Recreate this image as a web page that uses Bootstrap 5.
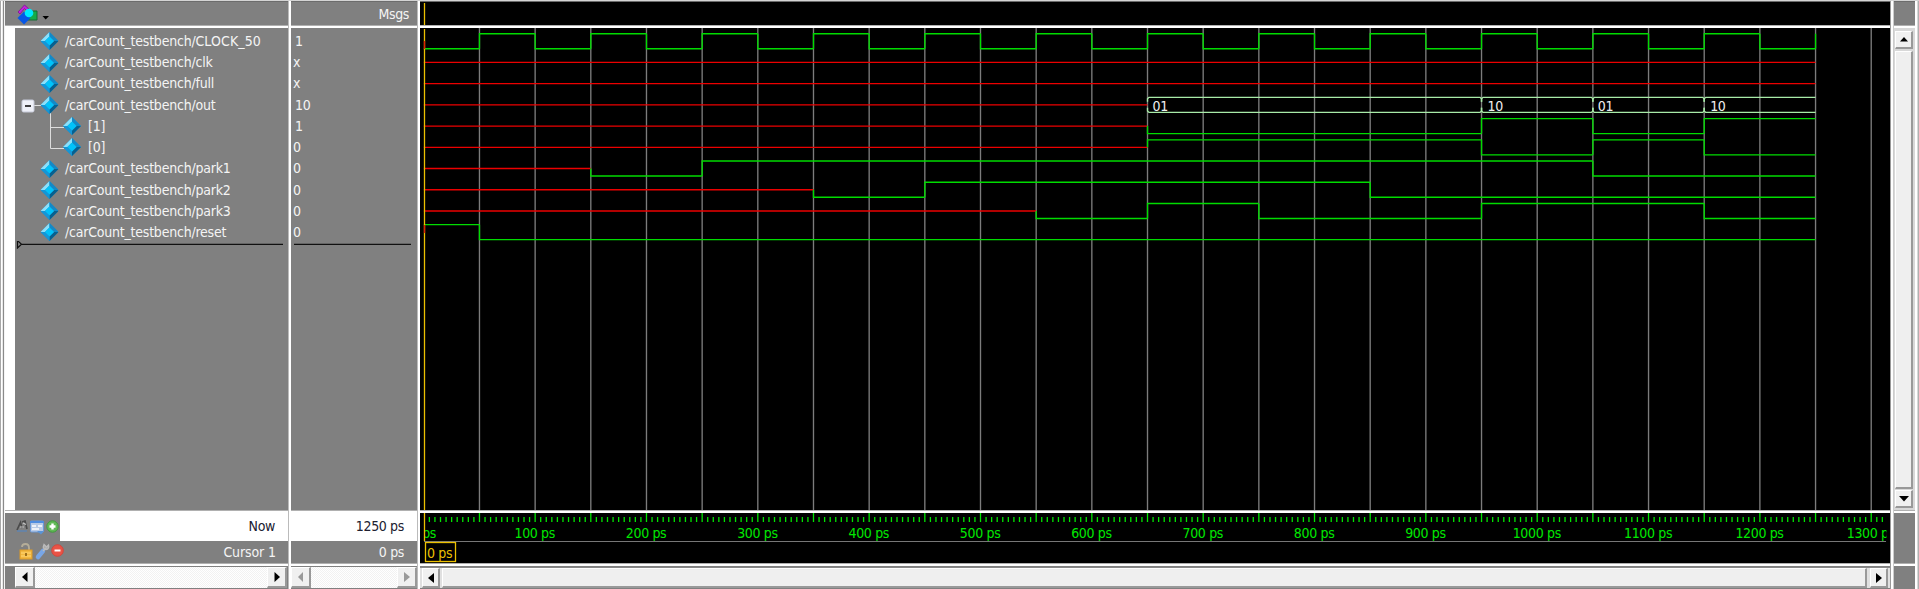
<!DOCTYPE html>
<html lang="en">
<head>
<meta charset="utf-8">
<title>Wave</title>
<link rel="stylesheet" href="https://cdn.jsdelivr.net/npm/bootstrap@5.3.0/dist/css/bootstrap.min.css">
<style>
:root{--pane:#808080}
body{font-family:"DejaVu Sans Condensed","DejaVu Sans",sans-serif;font-stretch:condensed;font-size:14px;line-height:21.22px;letter-spacing:-.35px;background:#808080;color:#f4f4f4;height:589px;overflow:hidden}
.win{height:589px;border-top:1px solid #d4d4d4}
.edge-l{width:5px;background:linear-gradient(90deg,#a8a8a8 0 1px,#fff 1px 2px,#e8e8e8 2px 3px,#8a8a8a 3px 4px,#f4f4f4 4px 5px)}
.edge-r{width:4px;background:linear-gradient(90deg,#fff 0 2px,#d8d8d8 2px 3px,#b0b0b0 3px 4px)}
.splitv{width:3px;background:linear-gradient(90deg,#bbb 0 1px,#fff 1px 3px)}
.splitv-r{width:4px;background:linear-gradient(90deg,#999 0 1px,#fff 1px 3px,#ccc 3px 4px)}
.splith{height:3px;background:linear-gradient(#b0b0b0 0 1px,#fff 1px 3px)}
.colm>*{flex:none}
.c-names{width:283px}.c-vals{width:126px}.c-wave{width:1470px}.c-right{width:21px}
.r-head{height:24px;border-top:1px solid #6c6c6c}
.r-main{height:482px}
.r-now{height:28px}.r-cur{height:22px}
.r-scroll{height:23px;padding-top:1px}
.r-main,.r-head,.r-cur,.r-scroll{background:var(--pane)}
.gut{width:10px;background:#fff}
.names-in{padding-top:2.4px}
.sig{height:21.22px;white-space:pre}
.sig svg{flex:none}
.sig>span{letter-spacing:-.22px;padding-top:.6px}
.caps{letter-spacing:.1px}
.vals-in .sig{padding-top:.6px}
.endmark{margin-top:-2px}
.vals-in{padding:2.4px 5px 0 2px}
.v1{padding-left:2px}
.nowbar{background:#fff;color:#202030}
.sb{height:21px}
.sbtn{width:20px;background:#f0f0f0;border:1px solid #fff;border-right:2px solid #999;border-bottom:2px solid #999;display:flex;align-items:center;justify-content:center;flex:none}
.trough{background:repeating-conic-gradient(#fff 0 25%,#f2f2f2 0 50%) 0 0/2px 2px}
.thumb{background:#efefef;border:1px solid #fff;border-right:2px solid #999;border-bottom:2px solid #999}
.vbar{background:#d8d8d8;padding:3px 2px 0 1px}
.vbar .sbtn{width:18px;height:18px}
.wbar{background:#e0e0e0;padding:0 2px 0 2px;height:21px;border-top:1px solid #888}
svg text{font-family:"DejaVu Sans Condensed","DejaVu Sans",sans-serif;font-stretch:condensed;font-size:14px;letter-spacing:-.35px}
svg{display:block}
</style>
</head>
<body>
<svg width="0" height="0" class="position-absolute"><defs>
<symbol id="gem" viewBox="0 0 18 18"><path d="M9 0L18 9L9 18L0 9Z" fill="#158fcb"/><path d="M9 0L0 9H4.5L9 4.5Z" fill="#8ce0fa"/><path d="M9 0L18 9H13.5L9 4.5Z" fill="#1489c6"/><path d="M18 9L9 18V13.5L13.5 9Z" fill="#07608f"/><path d="M0 9L9 18V13.5L4.5 9Z" fill="#1596d6"/><path d="M9 4.4L13.6 9L9 13.6L4.4 9Z" fill="#00c3fa"/></symbol>
</defs></svg>
<div class="win d-flex">
  <div class="edge-l"></div>
  <div class="colm c-names d-flex flex-column">
    <div class="r-head"><svg width="60" height="23"><path d="M13 10L19.500 3L25 8L23 10L19.500 6.500L15 12Z" fill="#c61fe0" stroke="#842094"/><path d="M25 9H32V18H21Z" fill="#14ad49" stroke="#176d35"/><path d="M19 9.500L25.500 16L19 22.500L12.500 16Z" fill="#0757e6"/><circle cx="24" cy="11" r="4.300" fill="#00eaff"/><path d="M37.500 14H44L40.700 17.500Z" fill="#000"/></svg></div>
    <div class="splith"></div>
    <div class="r-main d-flex">
      <div class="gut"></div>
      <div class="names-in flex-grow-1" id="names"></div>
    </div>
    <div class="splith"></div>
    <div class="r-now d-flex">
      <svg width="55" height="28"><path d="M12 17L15.500 9.500L17 15M17 9L20 8L22 16" fill="none" stroke="#4a4a4a" stroke-width="1.700"/><path d="M15 14H19M18 10L21 11.500" stroke="#c4c4c4" stroke-width="1.200"/><path d="M12 18H22" stroke="#4f86c9" fill="none"/><rect x="25.500" y="8" width="13" height="11" rx="1" fill="#b9cbe6" stroke="#6b98d6"/><path d="M25 9H39" stroke="#4f8de0" stroke-width="2"/><path d="M27 13H31M33 13H37M27 16H34" stroke="#fff" stroke-width="1.500"/><path d="M32 18H39L36 21.500Z" fill="#5a94d7"/><circle cx="47.500" cy="13.500" r="5.700" fill="#62b957" stroke="#3f9b3c"/><path d="M47.500 10.500V16.500M44.500 13.500H50.500" stroke="#fff" stroke-width="2.400"/></svg>
      <div class="nowbar flex-grow-1 d-flex align-items-center justify-content-end" style="padding-right:13px">Now</div>
    </div>
    <div class="r-cur d-flex align-items-center justify-content-between" style="padding-right:12px">
      <svg width="62" height="22"><path d="M17 6Q17 3 20.500 3Q24 3 24 7V10" fill="none" stroke="#b5ad98" stroke-width="1.800"/><rect x="15" y="9" width="12" height="9" fill="#f2b840" stroke="#dc9a26"/><path d="M16 12H26M16 15H26" stroke="#ffd878"/><path d="M21 12V15" stroke="#80540a" stroke-width="1.500"/><path d="M33 16L38 10" stroke="#78a6e6" stroke-width="4.500" stroke-linecap="round"/><path d="M38 10L41 7M39 3.500Q37 8 41 8.500Q44.500 8 43.500 4L41.500 6Z" stroke="#bbb" stroke-width="1.300" fill="#aaa"/><circle cx="52.500" cy="9.500" r="5.800" fill="#e95346" stroke="#d2463c"/><path d="M49.500 9.500H55.500" stroke="#fff" stroke-width="2"/></svg>
      <span style="padding-top:2px;letter-spacing:-.1px">Cursor 1</span>
    </div>
    <div class="splith"></div>
    <div class="r-scroll"><div class="sb d-flex" style="padding:0 1px 0 10px">
      <div class="sbtn"><svg width="6" height="10"><path d="M5.500 0V10L0 5Z"/></svg></div><div class="trough flex-grow-1"></div>
      <div class="sbtn"><svg width="6" height="10"><path d="M.5 0V10L6 5Z"/></svg></div></div></div>
  </div>
  <div class="splitv"></div>
  <div class="colm c-vals d-flex flex-column">
    <div class="r-head text-end" style="padding:2px 8px 0 0">Msgs</div>
    <div class="splith"></div>
    <div class="r-main vals-in" id="vals"></div>
    <div class="splith"></div>
    <div class="r-now nowbar d-flex align-items-center justify-content-end" style="padding-right:13px">1250 ps</div>
    <div class="r-cur d-flex align-items-center justify-content-end" style="padding:2px 13px 0 0">0 ps</div>
    <div class="splith"></div>
    <div class="r-scroll"><div class="sb d-flex">
      <div class="sbtn"><svg width="6" height="10" fill="#999"><path d="M5 0V10L0 5Z"/></svg></div><div class="trough flex-grow-1"></div>
      <div class="sbtn"><svg width="6" height="10" fill="#999"><path d="M0 0V10L6 5Z"/></svg></div></div></div>
  </div>
  <div class="splitv"></div>
  <div class="colm c-wave d-flex flex-column">
    <div class="r-head bg-black"><svg width="1470" height="23"><path d="M4.500 1V23" stroke="#ecc000" stroke-width="1.300"/></svg></div>
    <div class="splith"></div>
    <div class="r-main bg-black" id="wave"></div>
    <div class="splith"></div>
    <div class="bg-black" style="height:50px" id="ruler"></div>
    <div class="splith"></div>
    <div class="r-scroll"><div class="wbar d-flex">
      <div class="sbtn" style="width:18px"><svg width="6" height="10"><path d="M6 0V10L0 5Z"/></svg></div><div class="thumb flex-grow-1" style="margin:0 3px 0 2px"></div>
      <div class="sbtn" style="width:18px"><svg width="6" height="10"><path d="M0 0V10L6 5Z"/></svg></div></div></div>
  </div>
  <div class="splitv-r"></div>
  <div class="colm c-right d-flex flex-column">
    <div class="r-head"></div>
    <div class="splith"></div>
    <div class="r-main vbar d-flex flex-column">
      <div class="sbtn"><svg width="8" height="5"><path d="M0 4.500H8L4 0Z"/></svg></div>
      <div class="thumb" style="height:438px;margin:2px 0 1px"></div>
      <div class="sbtn"><svg width="10" height="6"><path d="M0 0H10L5 5.500Z"/></svg></div>
    </div>
    <div class="splith"></div>
    <div class="r-cur" style="height:50px"></div>
    <div class="splith"></div>
    <div class="r-scroll"></div>
  </div>
  <div class="edge-r"></div>
</div>
<script>
const P='/carCount_testbench/';
// w: [time, level] changes; level m is the unknown mid line, b a bus value
const sigs=[
 {n:P+'<span class="caps">CLOCK_50</span>',v:'1',w:Array.from({length:26},(_,i)=>[i*50,i%2?'h':'l'])},
 {n:P+'clk',v:'x',w:[[0,'m']]},
 {n:P+'full',v:'x',w:[[0,'m']]},
 {n:P+'out',v:'10',w:[[0,'m'],[650,'b','01'],[950,'b','10'],[1050,'b','01'],[1150,'b','10']]},
 {n:'[1]',v:'1',c:1,w:[[0,'m'],[650,'l'],[950,'h'],[1050,'l'],[1150,'h']]},
 {n:'[0]',v:'0',c:2,w:[[0,'m'],[650,'h'],[950,'l'],[1050,'h'],[1150,'l']]},
 {n:P+'park1',v:'0',w:[[0,'m'],[150,'l'],[250,'h'],[1050,'l']]},
 {n:P+'park2',v:'0',w:[[0,'m'],[350,'l'],[450,'h'],[850,'l']]},
 {n:P+'park3',v:'0',w:[[0,'m'],[550,'l'],[650,'h'],[750,'l'],[950,'h'],[1150,'l']]},
 {n:P+'reset',v:'0',w:[[0,'h'],[50,'l']]}];
const X=t=>+(3.8+t*1.1134).toFixed(2);
let names='',vals='',g='',fg='';
sigs.forEach((s,i)=>{
  const cx=s.c?57:34.5;
  let d='';
  if(s.n===P+'out')d='<path d="M19 11.500H26M35.500 18V22" stroke="#ddd"/><rect x="7" y="6" width="12" height="12" rx="1.500" fill="#eef0f8" stroke="#c5c9d8"/><path d="M10 12H16" stroke="#111" stroke-width="1.600"/>';
  if(s.c)d=`<path d="M35.500 0V${s.c===1?22:12.5}M35.500 12.500H49" stroke="#ddd" fill="none"/>`;
  names+=`<div class="sig d-flex"><svg width="${s.c?73:50}" height="22">${d}<use href="#gem" x="${cx-9}" y="2" width="18" height="18"/></svg><span>${s.n}</span></div>`;
  vals+=`<div class="sig${s.v[0]==='1'?' v1':''}">${s.v}</div>`;
  const y=13.2+i*21.22,Y={m:y,h:y-7.5,l:y+7.5};
  let px=null;
  s.w.forEach((e,k)=>{
    const last=k+1===s.w.length,a=X(e[0]),b=X(last?1250:s.w[k+1][0]);
    if(e[1]==='b'){
      const r1=last?`H${b}`:`H${b-1.5}L${b} ${y-6}V${y-3}`,r2=last?`H${b}`:`H${b-1.5}L${b} ${y+6}V${y+3}`;
      fg+=`<path d="M${a} ${y-3}V${y-6}L${a+1.5} ${y-7.5}${r1}M${a} ${y+3}V${y+6}L${a+1.5} ${y+7.5}${r2}" stroke="#a8eba8"/><text x="${a+5+(e[2]==='10'?1:0)}" y="${y+6}" fill="#f0f0f0">${e[2]}</text>`;
    }else{
      const c=e[1]==='m'?'#ec0000':'#00dc00';
      fg+=`<path d="M${a} ${px===null?Y[e[1]]:px}V${Y[e[1]]}H${b}" stroke="${c}"/>`;
    }
    px=Y[e[1]];
  });
});
names+='<svg class="endmark" width="273" height="8"><path d="M2.500 -.5V7L6.500 3.300ZM6 3.300H268" fill="none" stroke="#111" stroke-width="1.200"/></svg>';
vals+='<svg class="endmark" width="119" height="8"><path d="M1 3.300H118" stroke="#111" stroke-width="1.200"/></svg>';
document.getElementById('names').innerHTML=names;
document.getElementById('vals').innerHTML=vals;
for(let t=50;t<=1300;t+=50)g+=`<path d="M${X(t)} 0V482" stroke="#7c7c7c"/>`;
document.getElementById('wave').innerHTML=`<svg width="1470" height="482" fill="none" stroke-width="1.35">${g}${fg}<path d="M4.500 1V482" stroke="#ecc000" stroke-width="1.300"/><path d="M4.500 13V21M4.500 197V205" stroke="#e02000"/></svg>`;
let r='';
for(let t=5;t<=1310;t+=5)r+=`<path d="M${X(t)} ${t%50?4:0}V9" stroke="#00e400"/>`;
for(let t=0;t<=1300;t+=100)r+=`<text x="${X(t)-.4}" y="25" text-anchor="middle" fill="#00e800">${t} ps</text>`;
document.getElementById('ruler').innerHTML=`<svg width="1470" height="50"><defs><clipPath id="rc"><rect x="4" width="1462.500" height="50"/></clipPath></defs><g clip-path="url(#rc)" stroke-width="1.300">${r}</g><path d="M4 28.500H1466" stroke="#777"/><path d="M4.500 0V28" stroke="#ecc000" stroke-width="1.300"/><rect x="5.500" y="29.500" width="30" height="19" fill="none" stroke="#ecc000" stroke-width="1.300"/><text x="7" y="45" fill="#ecc000">0 ps</text></svg>`;
</script>
<script src="https://cdn.jsdelivr.net/npm/bootstrap@5.3.0/dist/js/bootstrap.bundle.min.js"></script>
</body>
</html>
